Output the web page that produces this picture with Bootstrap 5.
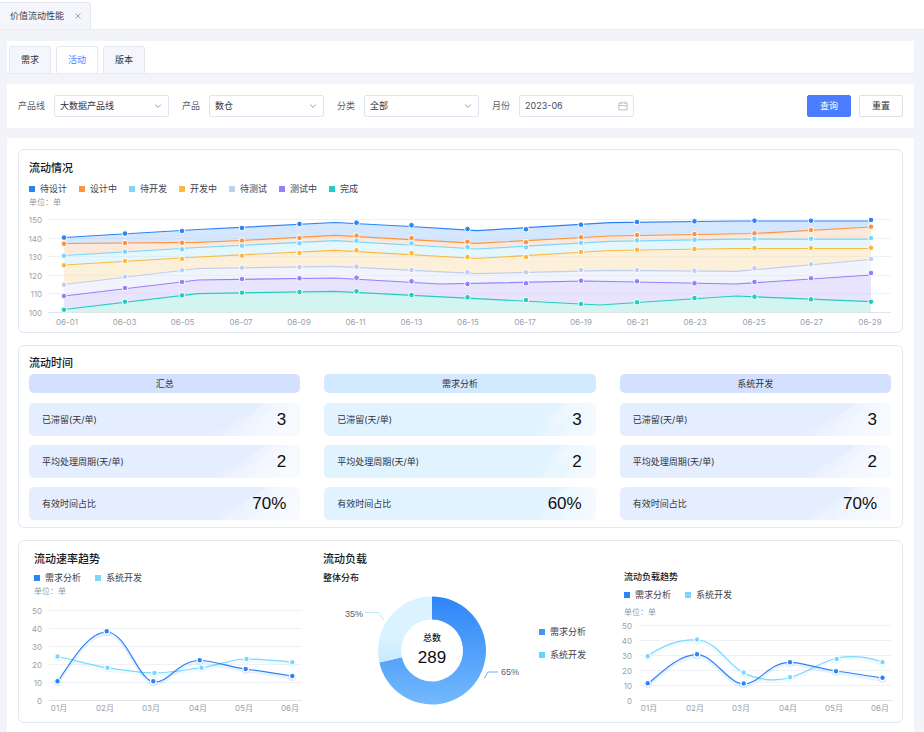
<!DOCTYPE html>
<html lang="zh-CN">
<head>
<meta charset="utf-8">
<meta name="viewport" content="width=device-width, initial-scale=1">
<title>价值流动性能</title>
<link href="https://cdn.jsdelivr.net/npm/bootstrap@5.3.0/dist/css/bootstrap.min.css" rel="stylesheet">
<style>
  body { background: #f3f4fa; color: #3d424d; font: 9px/14px Inter, "Noto Sans CJK SC", sans-serif; }
  .page-tabs { height: 30px; border-bottom: 1px solid #e9ebf1; }
  .page-tab { height: 27px; padding: 0 8px 0 10px; gap: 10px; background: #f4f6fb; border: 1px solid #e6e8ef; border-left: 0; border-bottom: 0; border-radius: 0 4px 0 0; }
  .close-btn { width: 8px; height: 8px; }
  .page-main { padding: 11px 10px 0 7px; gap: 10px; }
  .view-tabs { padding: 5px 2px 0; gap: 5px; border-bottom: 1px solid #e9ebf1; }
  .view-tabs .nav-link { height: 27px; padding: 0 11px; background: #f5f6fb; border: 1px solid #e6e8ef; border-bottom: 0; border-radius: 3px 3px 0 0; color: #30343c; font-size: 9px; }
  .view-tabs .nav-link.active { background: #fff; color: #4a80ff; }
  .filters { padding: 11px; gap: 13px; }
  .filters label { color: #5b606b; }
  .field { gap: 9px; }
  .field-box, .field .form-select { width: 115px; height: 22px; border: 1px solid #dfe5f0; border-radius: 2px; background-color: #fff; }
  .field .form-select { padding: 0 18px 0 5px; font-size: 9px; line-height: 14px; color: #30343c; background-position: right 6px center; background-size: 8px 8px;
    background-image: url("data:image/svg+xml,%3Csvg xmlns='http://www.w3.org/2000/svg' viewBox='0 0 8 8'%3E%3Cpath d='M1.2 2.6 4 5.4 6.8 2.6' fill='none' stroke='%23949aa6'/%3E%3C/svg%3E"); }
  .field-box { padding: 0 5px; }
  .field-box input { min-width: 0; flex: 1; border: 0; padding: 0; outline: 0; color: #4a4f59; background: none; }
  .filters .btn { width: 44px; height: 22px; padding: 0; font-size: 9px; border-radius: 2px; }
  .btn-query { background: #4a7dff; border-color: #4a7dff; color: #fff; }
  .btn-reset { background: #fff; border-color: #dcdfea; color: #30343c; }
  .board { padding: 11px; gap: 12px; }
  .panel { border: 1px solid #e4e8f2; border-radius: 6px; }
  .panel-flow { padding-top: 10px; }
  .inset { padding: 0 10px; }
  .panel-time { padding: 9px 11px 7px 10px; }
  .panel-load { padding: 10px 11px 0 15px; }
  h2, h3 { margin: 0; color: #16181d; font-weight: 500; }
  h2 { font-size: 11px; line-height: 16px; }
  h3 { font-size: 9px; line-height: 14px; }
  .legend { display: flex; gap: 12px; margin: 0; padding: 0; list-style: none; }
  .legend li { display: flex; align-items: center; gap: 5px; }
  .legend i { width: 6px; height: 6px; }
  .unit { font-size: 8px; line-height: 12px; color: #959ba8; }
  .chart { display: block; width: 100%; overflow: visible; }
  .chart text { font-size: 8px; fill: #9a9fab; }
  .trio { display: grid; grid-template-columns: repeat(3, 1fr); gap: 24px; margin-top: 3px; }
  .stat-head { height: 19px; border-radius: 5px; background: #d3e1ff; color: #30343c; margin-bottom: 10px; }
  .stat-list { gap: 9px; }
  .stat { height: 33px; padding: 0 14px 0 13px; border-radius: 5px; color: #30343c; background: #e5eeff right / auto 100% no-repeat;
    background-image: url("data:image/svg+xml,%3Csvg xmlns='http://www.w3.org/2000/svg' width='110' height='33'%3E%3Cdefs%3E%3ClinearGradient id='g' gradientUnits='userSpaceOnUse' x1='32' y1='6' x2='84' y2='38'%3E%3Cstop stop-color='%23fff' stop-opacity='0'/%3E%3Cstop offset='1' stop-color='%23fff' stop-opacity='.6'/%3E%3C/linearGradient%3E%3C/defs%3E%3Cpath d='M0 33Q48 25 75 0H110V33Z' fill='url(%23g)'/%3E%3Cpath d='M28 33Q66 22 88 0H110V33Z' fill='%23fff' opacity='.15'/%3E%3Cpath d='M55 33Q85 20 100 0H110V33Z' fill='%23fff' opacity='.15'/%3E%3C/svg%3E"); }
  .stat strong { font: 17px/20px "Liberation Sans", Arial, sans-serif; color: #0d0f12; }
  .tone-sky .stat-head { background: #d3e9ff; }
  .tone-sky .stat { background-color: #e1f3ff; background-image: url("data:image/svg+xml,%3Csvg xmlns='http://www.w3.org/2000/svg' width='70' height='33'%3E%3Cdefs%3E%3ClinearGradient id='g'%3E%3Cstop stop-color='%23fff' stop-opacity='.05'/%3E%3Cstop offset='1' stop-color='%23fff' stop-opacity='.6'/%3E%3C/linearGradient%3E%3C/defs%3E%3Cpath d='M10 33Q18 12 38 0H70V33Z' fill='url(%23g)'/%3E%3Cpath d='M16 33Q28 12 46 0H54Q36 12 26 33Z' fill='%23fff' opacity='.18'/%3E%3Cpath d='M34 33Q50 18 60 0H70V33Z' fill='%23fff' opacity='.15'/%3E%3C/svg%3E"); }
  .load-grid { display: grid; grid-template-columns: 289fr 301fr 267fr; }
  .load-grid .legend { gap: 14px; }
  .load-trend { padding-top: 19px; }
  .donut-row { display: grid; grid-template-columns: 207fr 94fr; }
  .donut-side { padding: 40px 0 0 9px; }
  .donut-side .legend { flex-direction: column; gap: 9px; }
  .gap-tight { margin-top: 6px; }
  .chart .donut-title { font-size: 9px; font-weight: 500; fill: #16181d; }
  .chart .donut-total { font-family: "Liberation Sans", Arial, sans-serif; font-size: 17px; fill: #0d0f12; }
  .chart .donut-pct { font-family: "Liberation Sans", Arial, sans-serif; font-size: 9px; fill: #5b606b; }
</style>
</head>
<body>
<div class="d-flex flex-column min-vh-100">
  <header class="page-tabs bg-white d-flex align-items-end">
    <div class="page-tab d-flex align-items-center">
      <span>价值流动性能</span>
      <button class="close-btn btn p-0 border-0 d-flex" type="button" aria-label="关闭">
        <svg viewBox="0 0 8 8" width="8" height="8"><path d="M1.5 1.5l5 5m0-5l-5 5" stroke="#8d929d" stroke-width=".8"/></svg>
      </button>
    </div>
  </header>

  <main class="page-main d-flex flex-column flex-grow-1">
    <nav class="view-tabs nav bg-white">
      <a class="nav-link d-flex align-items-center" href="#">需求</a>
      <a class="nav-link d-flex align-items-center active" aria-current="page" href="#">活动</a>
      <a class="nav-link d-flex align-items-center" href="#">版本</a>
    </nav>

    <form class="filters bg-white d-flex align-items-center">
      <div class="field d-flex align-items-center"><label for="line">产品线</label><select id="line" class="form-select"><option>大数据产品线</option></select></div>
      <div class="field d-flex align-items-center"><label for="product">产品</label><select id="product" class="form-select"><option>数仓</option></select></div>
      <div class="field d-flex align-items-center"><label for="kind">分类</label><select id="kind" class="form-select"><option>全部</option></select></div>
      <div class="field d-flex align-items-center"><label for="month">月份</label>
        <div class="field-box d-flex align-items-center"><input id="month" type="text" value="2023-06">
          <svg viewBox="0 0 10 10" width="10" height="10" fill="none" stroke="#a9b1be" stroke-width=".8"><path d="M.9 1.9h8.2v7H.9zM.9 4.6h8.2M3 .6v2.2M7 .6v2.2"/></svg>
        </div>
      </div>
      <div class="d-flex gap-2 ms-auto">
        <button class="btn btn-query" type="button">查询</button>
        <button class="btn btn-reset" type="reset">重置</button>
      </div>
    </form>

    <div class="board bg-white d-flex flex-column flex-grow-1">
      <section class="panel panel-flow">
        <div class="inset">
          <h2>流动情况</h2>
          <ul class="legend gap-tight" id="flowLegend"></ul>
          <div class="unit">单位：单</div>
        </div>
        <svg class="chart" id="flow" viewBox="19 208 883 124" role="img" aria-label="流动情况"></svg>
      </section>

      <section class="panel panel-time">
        <h2>流动时间</h2>
        <div class="trio">
          <div>
            <div class="stat-head d-flex align-items-center justify-content-center">汇总</div>
            <div class="stat-list d-flex flex-column">
              <div class="stat d-flex align-items-center justify-content-between"><span>已滞留(天/单)</span><strong>3</strong></div>
              <div class="stat d-flex align-items-center justify-content-between"><span>平均处理周期(天/单)</span><strong>2</strong></div>
              <div class="stat d-flex align-items-center justify-content-between"><span>有效时间占比</span><strong>70%</strong></div>
            </div>
          </div>
          <div class="tone-sky">
            <div class="stat-head d-flex align-items-center justify-content-center">需求分析</div>
            <div class="stat-list d-flex flex-column">
              <div class="stat d-flex align-items-center justify-content-between"><span>已滞留(天/单)</span><strong>3</strong></div>
              <div class="stat d-flex align-items-center justify-content-between"><span>平均处理周期(天/单)</span><strong>2</strong></div>
              <div class="stat d-flex align-items-center justify-content-between"><span>有效时间占比</span><strong>60%</strong></div>
            </div>
          </div>
          <div>
            <div class="stat-head d-flex align-items-center justify-content-center">系统开发</div>
            <div class="stat-list d-flex flex-column">
              <div class="stat d-flex align-items-center justify-content-between"><span>已滞留(天/单)</span><strong>3</strong></div>
              <div class="stat d-flex align-items-center justify-content-between"><span>平均处理周期(天/单)</span><strong>2</strong></div>
              <div class="stat d-flex align-items-center justify-content-between"><span>有效时间占比</span><strong>70%</strong></div>
            </div>
          </div>
        </div>
      </section>

      <section class="panel panel-load">
        <div class="load-grid">
          <div>
            <h2>流动速率趋势</h2>
            <ul class="legend mt-1">
              <li><i style="background:#2a84f8"></i>需求分析</li>
              <li><i style="background:#7ad7fd"></i>系统开发</li>
            </ul>
            <div class="unit">单位：单</div>
            <svg class="chart" id="speed" viewBox="34 597 289 125" role="img" aria-label="流动速率趋势"></svg>
          </div>
          <div>
            <h2>流动负载</h2>
            <h3 class="mt-1">整体分布</h3>
            <div class="donut-row">
              <svg class="chart" viewBox="323 585 207 137" role="img" aria-label="整体分布">
                <defs>
                  <linearGradient id="deep" x1="0" y1="0" x2="0" y2="1"><stop stop-color="#2e85f8"/><stop offset="1" stop-color="#73b9fc"/></linearGradient>
                  <linearGradient id="pale" x1="0" y1="0" x2="0" y2="1"><stop stop-color="#daf3ff"/><stop offset=".6" stop-color="#daf3ff"/><stop offset="1" stop-color="#c9ebff"/></linearGradient>
                </defs>
                <path fill="url(#deep)" d="M432 596.5A54 54 0 1 1 379.3 662.4L401.8 657.3A31 31 0 1 0 432 619.5Z"/>
                <path fill="url(#pale)" d="M432 596.5A54 54 0 0 0 379.3 662.4L401.8 657.3A31 31 0 0 1 432 619.5Z"/>
                <path d="M365 612.5h13.500l5.500 7.500" fill="none" stroke="#b5e6f9" stroke-width=".9"/>
                <path d="M498 672h-10l-3.500 6" fill="none" stroke="#6d9df8" stroke-width=".9"/>
                <text class="donut-pct" x="363" y="617" text-anchor="end">35%</text>
                <text class="donut-pct" x="501" y="675">65%</text>
                <text class="donut-title" x="432" y="641" text-anchor="middle">总数</text>
                <text class="donut-total" x="432" y="663" text-anchor="middle">289</text>
              </svg>
              <div class="donut-side">
                <ul class="legend">
                  <li><i style="background:#4b93f8"></i>需求分析</li>
                  <li><i style="background:#63d6fb"></i>系统开发</li>
                </ul>
              </div>
            </div>
          </div>
          <div class="load-trend">
            <h3>流动负载趋势</h3>
            <ul class="legend mt-1">
              <li><i style="background:#2a84f8"></i>需求分析</li>
              <li><i style="background:#7ad7fd"></i>系统开发</li>
            </ul>
            <div class="unit mt-1">单位：单</div>
            <svg class="chart" id="load" viewBox="624 618 267 104" role="img" aria-label="流动负载趋势"></svg>
          </div>
        </div>
      </section>
    </div>
  </main>
</div>

<script src="https://cdn.jsdelivr.net/npm/bootstrap@5.3.0/dist/js/bootstrap.bundle.min.js"></script>
<script>
const text = (x, y, s, anchor) => `<text x="${x}" y="${y}" text-anchor="${anchor}">${s}</text>`;
const axis = (x1, x2, labelX, ys, labels) => ys.map((y, i) =>
  `<path d="M${x1} ${y}H${x2}" stroke="${i === ys.length - 1 ? '#e3e5ec' : '#f0f1f5'}"/>` +
  text(labelX, y + 3, labels[i], 'end')).join('');

/* Stacked flow chart: line holds the turning points, dots the height of each sampled day */
const days = [64, 125, 182, 242, 299.5, 356.5, 411.5, 467.5, 526, 581, 637, 694.5, 754.5, 811, 871];
const flow = [
  ['待设计', '#2a84f8', '#d5e7fe', '64 237.5 198 229.5 335 222.5 411 226.500 477 230.7 526 227.7 610 222.7 736 221 871 221', [237.6, 233.5, 231, 228, 224, 222.7, 225.3, 229, 229.3, 224.7, 222, 221.3, 220.7, 220.7, 220]],
  ['设计中', '#fc9541', '#fde9db', '64 243.5 198 242.3 242 240.5 335 235.3 477 243.3 610 236 754 233.5 871 227', [243.7, 243, 242.7, 240.7, 238, 235.7, 238, 241.7, 242.3, 237.3, 235, 234, 233.3, 230, 226.7]],
  ['待开发', '#7ad7fd', '#e4f6fe', '64 255.5 198 247.5 335 240.7 477 249 610 241.3 736 239.2 871 239.2', [255.7, 251.7, 249.3, 245.7, 243.3, 240.7, 243.3, 247, 247.3, 242.7, 240.3, 239.7, 238.7, 238.7, 238]],
  ['开发中', '#fbba3f', '#fdf0db', '64 265 198 257 335 250.3 477 258.5 610 250.5 736 248.500 871 248.500', [265.3, 261, 259, 255.7, 253, 250.3, 253, 257, 257, 252, 249.7, 249, 248, 248, 247.7]],
  ['待测试', '#bfcfee', '#f1f4fd', '64 284.5 198 268.5 335 266.3 477 273.7 610 270.3 736 271.3 871 259.5', [284.7, 276.7, 270.3, 267.7, 267, 266.7, 270, 272.3, 272.3, 270, 270, 270.7, 268.3, 264.3, 259]],
  ['测试中', '#977ffb', '#e9e4fe', '64 296 198 280 335 278 440 284 585 281 736 284 871 275', [296, 288, 282, 279, 278.3, 277.7, 281.3, 284, 283.3, 280.7, 281.3, 283.3, 282, 278.3, 273]],
  ['完成', '#26ccbe', '#d4f4f1', '64 309.5 198 293.7 335 291.3 600 305 736 296 871 301.7', [309.7, 301.7, 295.3, 292.7, 292, 291.3, 295, 297.3, 300, 304, 302.3, 298, 296.7, 299.3, 301.7]]
];
document.getElementById('flowLegend').innerHTML =
  flow.map(s => `<li><i style="background:${s[1]}"></i>${s[0]}</li>`).join('');
const gridYs = [219.5, 238.5, 256.5, 275.5, 293.5, 312.5];
document.getElementById('flow').innerHTML =
  axis(48, 891, 42, gridYs, [150, 140, 130, 120, 110, 100]) +
  flow.map(s => `<path d="M${s[3]} 871 312 64 312Z" fill="${s[2]}"/>`).join('') +
  gridYs.slice(1, 5).map(y => `<path d="M64 ${y}H871" stroke="#5b6b90" opacity=".05"/>`).join('') +
  flow.map(s => `<path d="M${s[3]}" fill="none" stroke="${s[1]}" stroke-width="1.2"/>`).join('') +
  flow.map(s => s[4].map((y, i) => `<circle cx="${days[i]}" cy="${y}" r="2.8" fill="${s[1]}" stroke="#fff"/>`).join('')).join('') +
  [67, 124.5, 182.5, 241, 299, 355.5, 411.5, 468, 525, 581, 637.5, 695, 754, 811.5, 870].map((x, i) =>
    text(x, 325, '06-' + String(i * 2 + 1).padStart(2, '0'), 'middle')).join('');

/* Two-series monthly trend with a soft glow below each curve */
function trend(id, x1, x2, labelX, ys, monthXs, series) {
  document.getElementById(id).innerHTML =
    axis(x1, x2, labelX, ys, [50, 40, 30, 20, 10, 0]) +
    series.map(s =>
      `<path d="${s.d}" fill="none" stroke="${s.color}" stroke-width="3" opacity=".1" transform="translate(0 2)"/>` +
      `<path d="${s.d}" fill="none" stroke="${s.color}" stroke-width="1.2"/>` +
      s.dots.map(p => `<circle cx="${p[0]}" cy="${p[1] + 1}" r="4" fill="${s.color}" opacity=".15"/><circle cx="${p[0]}" cy="${p[1]}" r="2.8" fill="${s.color}" stroke="#fff" stroke-width="1.2"/>`).join('')
    ).join('') +
    monthXs.map((x, i) => text(x, 711, `0${i + 1}月`, 'middle')).join('');
}
trend('speed', 49, 302, 42, [610.5, 628.5, 646.5, 664.5, 682.5, 700.5], [59, 105, 151, 198, 244, 290], [
  { color: '#7ad7fd', d: 'M57.5 656.500C75 660 90 665 107 667.7S140 673 154.500 673S185 670 201.500 667.7S232 659 246 659S278 661 292 662',
    dots: [[57.5, 656.5], [107.5, 667.7], [154.5, 673], [201.5, 667.7], [246.5, 659], [292.3, 662.3]] },
  { color: '#2a84f8', d: 'M57.5 682C75 655 90 632 106.700 632C127 632 138 682 155 682C170 682 178 660.500 200 660.500C213 660.500 230 667 245.500 669S280 674 292 676',
    dots: [[57.5, 681.3], [106.7, 631.3], [153.3, 681.3], [199.7, 660.3], [245.7, 669], [292.3, 676]] }
]);
trend('load', 640, 892, 632, [625.5, 640.5, 655.5, 670.5, 685.5, 700.5], [649, 695, 741, 788, 834, 880], [
  { color: '#7ad7fd', d: 'M647.7 656C662 646 680 639 697 640C718 641 728 666 744 673C758 680 775 682 790 677.500C807 673 822 661 837 658C852 655 868 657 882.500 662',
    dots: [[647.7, 656.3], [697, 639.5], [743.7, 672.5], [790, 677.3], [836.7, 659], [882.5, 662.3]] },
  { color: '#2a84f8', d: 'M647.7 684C662 672 678 655 697 654.700C714 654.700 728 684 743.700 684C760 684 768 662.300 790 662.300C803 662.300 820 669 836 671S868 676 882.500 678',
    dots: [[647.7, 683.3], [697, 654.3], [743.7, 683.5], [790, 662.3], [836, 671.2], [882.5, 677.8]] }
]);
</script>
</body>
</html>
